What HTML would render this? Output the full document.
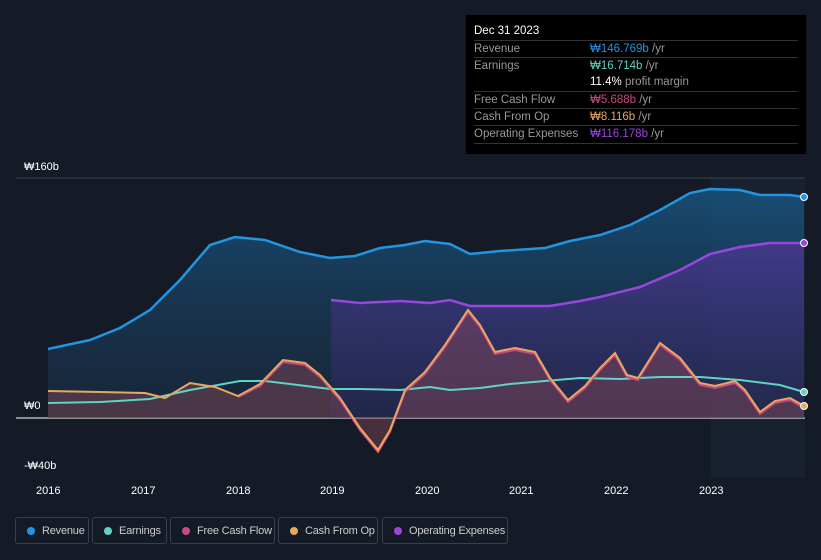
<!DOCTYPE html>
<html><head><meta charset="utf-8"><style>
body{margin:0;background:#151b26;width:821px;height:560px;overflow:hidden;font-family:"Liberation Sans","Noto Sans CJK KR",sans-serif;position:relative}
.tt{position:absolute;left:466px;top:15px;width:340px;height:139px;background:#000;font-size:11.5px}
.tt .h{color:#fff;font-size:11.5px;position:absolute;left:8px;top:10px}
.row{position:absolute;left:8px;width:324px;height:17px;border-top:1px solid #333;color:#999;line-height:17px}
.row span{position:absolute;left:116px}
.ax{position:absolute;color:#fff;font-size:11px}
.leg{position:absolute;top:517px;height:27px;border:1px solid #3a404b;border-radius:3px;color:#ccc;font-size:11px;letter-spacing:-0.2px;line-height:26px;box-sizing:border-box;padding-left:26px;white-space:nowrap}
.leg i{position:absolute;left:11px;top:9px;width:8px;height:8px;border-radius:50%}
</style></head><body>
<svg width="821" height="560" style="position:absolute;left:0;top:0">
<defs>
<linearGradient id="rg" x1="0" y1="0" x2="0" y2="1"><stop offset="0" stop-color="#1a5a8a" stop-opacity=".75"/><stop offset="1" stop-color="#1a3550" stop-opacity=".4"/></linearGradient>
<linearGradient id="og" x1="0" y1="0" x2="0" y2="1"><stop offset="0" stop-color="#5a35a0" stop-opacity=".6"/><stop offset="1" stop-color="#3a2a70" stop-opacity=".3"/></linearGradient>
</defs>
<rect x="711" y="178" width="94" height="300" fill="#1b2a3c" opacity=".45"/>
<line x1="16" y1="178" x2="805" y2="178" stroke="#3a404b"/>
<line x1="16" y1="418" x2="805" y2="418" stroke="#fff" stroke-width="1"/>
<path d="M48,349 L90,340 120,328 150,310 180,280 210,245 235,237 265,240 300,252 330,258 355,256 380,248 405,245 425,241 450,244 470,254 500,251 545,248 570,241 600,235 630,225 660,210 690,193 710,189 740,190 760,195 790,195 804,197 L804,418 L48,418Z" fill="url(#rg)"/>
<path d="M331,300 L360,303 400,301 430,303 450,300 470,306 500,306 550,306 580,301 600,297 640,287 680,270 710,254 740,247 770,243 804,243 L804,418 L331,418Z" fill="url(#og)"/>
<path d="M48,391 L100,392 145,393 165,398 190,383 215,387 238,396 260,384 283,360 305,363 320,375 340,398 360,428 378,450 390,430 405,390 425,372 445,345 468,310 480,325 495,352 515,348 535,352 550,378 568,400 585,386 600,368 615,353 627,375 638,378 660,343 680,358 700,383 715,386 735,381 745,390 760,412 775,401 790,398 804,406 L804,418 L48,418Z" fill="#8a4a5a" opacity=".45"/>
<path d="M48,349 L90,340 120,328 150,310 180,280 210,245 235,237 265,240 300,252 330,258 355,256 380,248 405,245 425,241 450,244 470,254 500,251 545,248 570,241 600,235 630,225 660,210 690,193 710,189 740,190 760,195 790,195 804,197" fill="none" stroke="#2394e0" stroke-width="2.5"/>
<path d="M331,300 L360,303 400,301 430,303 450,300 470,306 500,306 550,306 580,301 600,297 640,287 680,270 710,254 740,247 770,243 804,243" fill="none" stroke="#9a45e0" stroke-width="2.5"/>
<path d="M48,403 L100,402 150,399 190,390 240,381 265,381 290,384 330,389 360,389 400,390 430,387 450,390 480,388 510,384 545,381 580,378 620,379 660,377 700,377 740,380 780,385 804,392" fill="none" stroke="#5fd3c4" stroke-width="2"/>
<path d="M238,397 L260,386 283,362 305,365 320,377 340,400 360,430 378,452 390,432 405,392 425,374 445,347 468,312 480,327 495,354 515,350 535,354 550,380 568,402 585,388 600,370 615,355 627,377 638,380 660,345 680,360 700,385 715,388 735,383 745,392 760,414 775,403 790,400 804,408" fill="none" stroke="#c94a80" stroke-width="2"/>
<path d="M48,391 L100,392 145,393 165,398 190,383 215,387 238,396 260,384 283,360 305,363 320,375 340,398 360,428 378,450 390,430 405,390 425,372 445,345 468,310 480,325 495,352 515,348 535,352 550,378 568,400 585,386 600,368 615,353 627,375 638,378 660,343 680,358 700,383 715,386 735,381 745,390 760,412 775,401 790,398 804,406" fill="none" stroke="#e8a860" stroke-width="2"/>
<circle cx="804" cy="197" r="3.5" fill="#2394e0" stroke="#fff"/>
<circle cx="804" cy="243" r="3.5" fill="#9a45e0" stroke="#fff"/>
<circle cx="804" cy="392" r="3.5" fill="#5fd3c4" stroke="#fff"/>
<circle cx="804" cy="406" r="3.5" fill="#e8a860" stroke="#fff"/>
</svg>
<div class="ax" style="left:24px;top:161px">₩160b</div>
<div class="ax" style="left:24px;top:400px">₩0</div>
<div class="ax" style="left:24px;top:460px">-₩40b</div>
<div class="ax" style="left:36px;top:485px">2016</div>
<div class="ax" style="left:131px;top:485px">2017</div>
<div class="ax" style="left:226px;top:485px">2018</div>
<div class="ax" style="left:320px;top:485px">2019</div>
<div class="ax" style="left:415px;top:485px">2020</div>
<div class="ax" style="left:509px;top:485px">2021</div>
<div class="ax" style="left:604px;top:485px">2022</div>
<div class="ax" style="left:699px;top:485px">2023</div>
<div class="tt">
<div class="h">Dec 31 2023</div>
<div class="row" style="top:25px">Revenue<span style="color:#2394e0">₩146.769b <b style="color:#999;font-weight:normal">/yr</b></span></div>
<div class="row" style="top:42px">Earnings<span style="color:#5fd3c4">₩16.714b <b style="color:#999;font-weight:normal">/yr</b></span></div>
<div class="row" style="top:59px;border-top:none"><span style="color:#fff">11.4% <b style="color:#999;font-weight:normal">profit margin</b></span></div>
<div class="row" style="top:76px">Free Cash Flow<span style="color:#c94a80">₩5.688b <b style="color:#999;font-weight:normal">/yr</b></span></div>
<div class="row" style="top:93px">Cash From Op<span style="color:#e8a860">₩8.116b <b style="color:#999;font-weight:normal">/yr</b></span></div>
<div class="row" style="top:110px">Operating Expenses<span style="color:#9a45e0">₩116.178b <b style="color:#999;font-weight:normal">/yr</b></span></div>
<div class="row" style="top:128px;height:0"></div>
</div>
<div class="leg" style="left:15px;width:74px"><i style="background:#2394e0"></i>Revenue</div>
<div class="leg" style="left:92px;width:75px"><i style="background:#5fd3c4"></i>Earnings</div>
<div class="leg" style="left:170px;width:105px"><i style="background:#c94a80"></i>Free Cash Flow</div>
<div class="leg" style="left:278px;width:100px"><i style="background:#e8a860"></i>Cash From Op</div>
<div class="leg" style="left:382px;width:126px"><i style="background:#9a45e0"></i>Operating Expenses</div>
</body></html>
